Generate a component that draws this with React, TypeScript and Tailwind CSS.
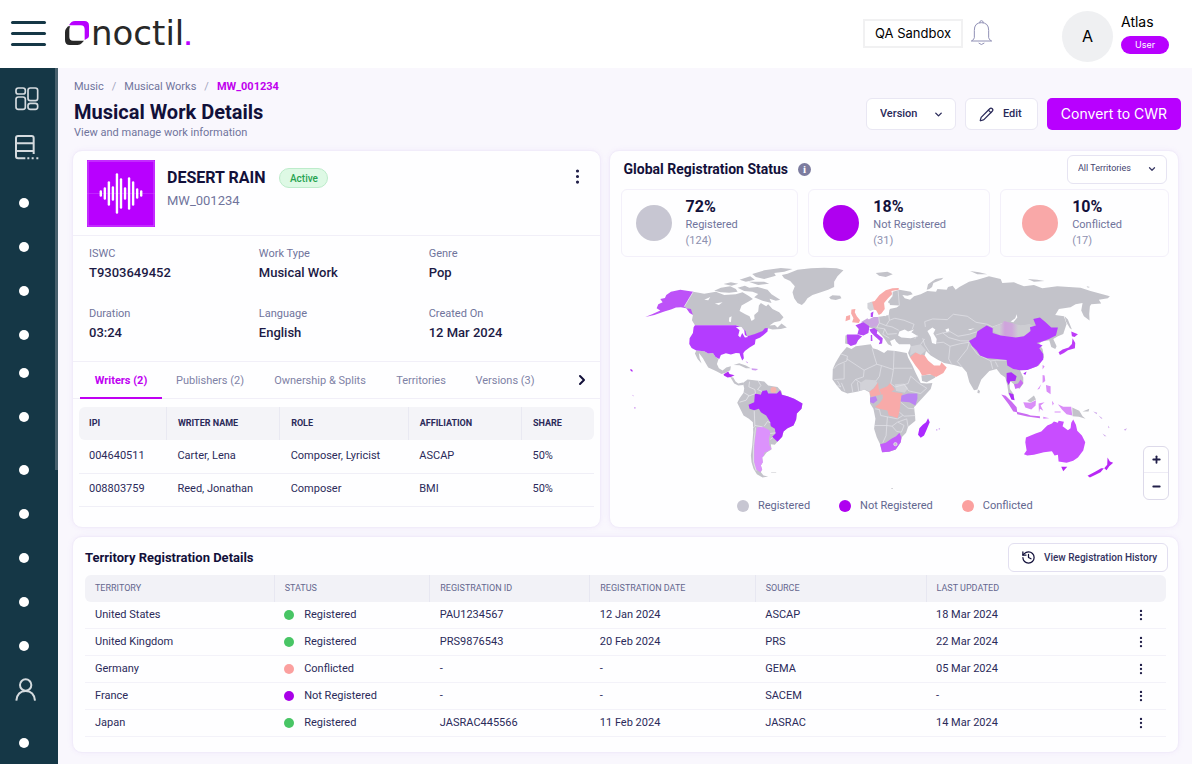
import { useState, type ReactNode } from 'react';
import { ChevronDown, ChevronRight, EllipsisVertical, History, Minus, Pencil, Plus } from 'lucide-react';

const DETAILS = [
  { label: 'ISWC', value: 'T9303649452' },
  { label: 'Work Type', value: 'Musical Work' },
  { label: 'Genre', value: 'Pop' },
  { label: 'Duration', value: '03:24' },
  { label: 'Language', value: 'English' },
  { label: 'Created On', value: '12 Mar 2024' },
];

const TABS = [
  { label: 'Writers (2)', width: 'w-[82px]' },
  { label: 'Publishers (2)', width: 'w-20' },
  { label: 'Ownership & Splits', width: 'w-[124px]' },
  { label: 'Territories', width: 'w-[62px]' },
  { label: 'Versions (3)', width: 'w-[90px]' },
];

const WRITERS = [
  { ipi: '004640511', name: 'Carter, Lena', role: 'Composer, Lyricist', affiliation: 'ASCAP', share: '50%' },
  { ipi: '008803759', name: 'Reed, Jonathan', role: 'Composer', affiliation: 'BMI', share: '50%' },
];

const WRITER_COLS = [
  { label: 'IPI', width: 'w-[17%]' },
  { label: 'WRITER NAME', width: 'w-[22%]' },
  { label: 'ROLE', width: 'w-[25%]' },
  { label: 'AFFILIATION', width: 'w-[22%]' },
  { label: 'SHARE', width: 'w-[14%]' },
];

const STATS = [
  { pct: '72%', label: 'Registered', count: '(124)', dot: 'bg-[#c7c6d2]', pad: 'pl-[14px]' },
  { pct: '18%', label: 'Not Registered', count: '(31)', dot: 'bg-[#af00f0]', pad: 'pl-[14px]' },
  { pct: '10%', label: 'Conflicted', count: '(17)', dot: 'bg-[#f9a8a8]', pad: 'pl-[21px]' },
];

const STATUS_DOT: Record<string, string> = {
  Registered: 'bg-[#48c565]',
  Conflicted: 'bg-[#fba09f]',
  'Not Registered': 'bg-[#a900e8]',
};

const TERRITORY_COLS = [
  { label: 'TERRITORY', width: 'w-[17.5%]' },
  { label: 'STATUS', width: 'w-[14.4%]' },
  { label: 'REGISTRATION ID', width: 'w-[14.8%]' },
  { label: 'REGISTRATION DATE', width: 'w-[15.3%]' },
  { label: 'SOURCE', width: 'w-[15.8%]' },
  { label: 'LAST UPDATED', width: 'w-[17.2%]' },
];

const TERRITORIES = [
  { name: 'United States', status: 'Registered', id: 'PAU1234567', date: '12 Jan 2024', source: 'ASCAP', updated: '18 Mar 2024' },
  { name: 'United Kingdom', status: 'Registered', id: 'PRS9876543', date: '20 Feb 2024', source: 'PRS', updated: '22 Mar 2024' },
  { name: 'Germany', status: 'Conflicted', id: '-', date: '-', source: 'GEMA', updated: '05 Mar 2024' },
  { name: 'France', status: 'Not Registered', id: '-', date: '-', source: 'SACEM', updated: '-' },
  { name: 'Japan', status: 'Registered', id: 'JASRAC445566', date: '11 Feb 2024', source: 'JASRAC', updated: '14 Mar 2024' },
];

const CARD = 'rounded-[10px] border border-[#f1ecfa] bg-[#fefeff] shadow-[0_0_5px_rgba(190,150,240,0.12)]';

function Logo() {
  return (
    <a href="#home" aria-label="noctil home" className="flex items-center">
      <svg width="24" height="24" viewBox="0 0 72 72" className="shrink-0">
        <path d="M12 13 Q18 0 30 0 H58 Q72 0 72 14 V44 Q72 48 69 51 L59 57 V26 Q59 13 47 13 Z" fill="#b800ff" />
        <path d="M9 16 H16 Q13 20 13 26 V48 Q13 59 24 59 H57 L50 67 Q46 72 38 72 H14 Q0 72 0 57 V34 Q0 27 3 23 Z" fill="#282828" />
      </svg>
      <span className="ml-[2px] font-['DejaVu_Sans',sans-serif] text-[34px] leading-10 font-normal text-[#282828]">
        noctil<span className="text-xl font-bold text-[#b800ff]">.</span>
      </span>
    </a>
  );
}

function TopBar() {
  return (
    <header className="flex h-[68px] shrink-0 items-center bg-white pb-[2px] pl-[11px] pr-[23px] font-[Inter,sans-serif]">
      <button type="button" aria-label="Toggle menu" className="mr-[19px] flex w-[35px] flex-col gap-2">
        <span className="h-[3px] rounded-full bg-[#153746]" />
        <span className="h-[3px] rounded-full bg-[#153746]" />
        <span className="h-[3px] rounded-full bg-[#153746]" />
      </button>
      <Logo />
      <div className="ml-auto flex items-center">
        <button type="button" className="h-[29px] w-[100px] border-2 border-[#f1f1f2] pt-px text-[13px] text-black">
          QA Sandbox
        </button>
        <button type="button" aria-label="Notifications" className="ml-[7px]">
          <svg width="23" height="26" viewBox="0 0 69 78" fill="none" stroke="#9090b5" strokeWidth="3">
            <path d="M29 9 Q29 2 34 2 Q40 2 40 9" />
            <path d="M13 53 V31 Q13 8 34 8 Q56 8 56 31 V53 Q57 60 65 63 H4 Q12 60 13 53 Z" />
            <path d="M26 69 Q34 78 43 69" />
          </svg>
        </button>
        <div className="ml-[69px] flex items-center pt-[6px]">
          <span className="flex size-[51px] items-center justify-center rounded-full bg-[#eff0f2] text-base text-black">
            A
          </span>
          <div className="ml-2 flex flex-col gap-[3px] pb-[7px]">
            <span className="text-sm leading-[22px] text-black">Atlas</span>
            <span className="flex h-[18px] w-12 items-center justify-center rounded-full bg-[#b800ff] text-[9px] text-white">
              User
            </span>
          </div>
        </div>
      </div>
    </header>
  );
}

function NavDots({ count }: { count: number }) {
  return (
    <>
      {Array.from({ length: count }, (_, i) => (
        <a key={i} href="#section" aria-label="Section" className="flex h-10 items-center pl-[19px]">
          <span className="size-[10px] rounded-full bg-white" />
        </a>
      ))}
    </>
  );
}

function Sidebar() {
  return (
    <nav className="relative flex w-[58px] shrink-0 flex-col gap-1 bg-[#153746] pt-[11px]">
      {/* scroll thumb */}
      <span className="absolute right-0 top-0 h-[402px] w-[3px] bg-[#48606d]" />
      <a href="#dashboard" aria-label="Dashboard" className="flex h-10 items-center pl-[15px]">
        <svg width="24" height="24" viewBox="0 0 72 72" fill="none" stroke="#d5dbdf" strokeWidth="5">
          <rect x="3" y="3" width="28" height="18" rx="7" />
          <rect x="39" y="3" width="29" height="38" rx="7" />
          <rect x="3" y="30" width="28" height="37" rx="7" />
          <rect x="39" y="49" width="29" height="18" rx="7" />
        </svg>
      </a>
      <a href="#catalogue" aria-label="Catalogue" className="mt-1 flex h-10 items-center pl-[15px]">
        <svg width="24" height="25" viewBox="0 0 72 75" fill="none" stroke="#d5dbdf" strokeWidth="6">
          <path d="M31 70 H9 Q3 70 3 64 V9 Q3 3 9 3 H50 Q56 3 56 9 V57 M3 25 H56 M3 48 H56" />
          <path d="M37 70 h6 M50 70 h6 M64 70 h6" />
        </svg>
      </a>
      <div className="mt-3 flex flex-col gap-1">
        <NavDots count={4} />
      </div>
      <div className="-mt-[6px] flex flex-col gap-1">
        <NavDots count={2} />
      </div>
      <div className="mt-[9px] flex flex-col gap-1">
        <NavDots count={5} />
        <a href="#profile" aria-label="Profile" className="flex h-10 items-center pl-[15px]">
          <svg width="22" height="24" viewBox="0 0 66 72" fill="none" stroke="#d5dbdf" strokeWidth="6">
            <circle cx="32" cy="21" r="17" />
            <path d="M4 68 C6 47 18 39 32 39 C46 39 58 47 60 68" />
          </svg>
        </a>
      </div>
      <div className="mt-[9px]">
        <NavDots count={1} />
      </div>
    </nav>
  );
}

function PageHeader() {
  return (
    <div className="flex items-start justify-between pl-[2px]">
      <div>
        <nav aria-label="Breadcrumb" className="flex gap-2 text-[11px] leading-[18px] text-[#70749c]">
          <a href="#music">Music</a>
          <span className="text-[#a3a5bd]">/</span>
          <a href="#works">Musical Works</a>
          <span className="text-[#a3a5bd]">/</span>
          <a href="#work" className="font-bold text-[#c000ee]">
            MW_001234
          </a>
        </nav>
        <h1 className="mt-[2px] text-xl leading-7 font-bold text-[#12103a]">Musical Work Details</h1>
        <p className="text-[11px] leading-[14px] text-[#70749c]">View and manage work information</p>
      </div>
      <div className="-mr-[2px] flex gap-[9px] pt-5">
        <div className="relative">
          <select
            aria-label="Version"
            className="h-8 w-[90px] appearance-none rounded-md border border-[#e9e7f3] bg-white pl-[13px] text-[11px] font-medium text-[#2a2a59]"
          >
            <option>Version</option>
          </select>
          <ChevronDown size={11} strokeWidth={3} className="pointer-events-none absolute right-3 top-[11px] text-[#2a2a59]" />
        </div>
        <button
          type="button"
          className="flex h-8 w-[73px] items-center gap-[9px] rounded-md border border-[#e9e7f3] bg-white pl-[13px] text-[11px] font-medium text-[#2a2a59]"
        >
          <Pencil size={15} strokeWidth={2} /> Edit
        </button>
        <button
          type="button"
          className="h-8 w-[134px] rounded-[5px] bg-[#b800ff] font-[Inter,sans-serif] text-sm text-white"
        >
          Convert to CWR
        </button>
      </div>
    </div>
  );
}

const WAVE = [3, 6, 12, 7, 20, 15, 6, 16, 12, 5, 3];

function Artwork() {
  return (
    <svg width="68" height="67" viewBox="0 0 68 67" className="shrink-0">
      <rect width="68" height="67" fill="#b800ff" />
      <rect x="1" y="1" width="66" height="65" fill="none" stroke="#cd55ff" strokeWidth="1" />
      <path d="M0 33.5 H68" stroke="#cb4bff" strokeWidth="0.5" />
      {WAVE.map((h, i) => (
        <path key={i} d={`M${13.8 + i * 4.04} ${33.5 - h + 1} v${h * 2 - 2}`} stroke="#fff" strokeWidth="2.4" strokeLinecap="round" />
      ))}
    </svg>
  );
}

function WorkCard() {
  const [tab, setTab] = useState(0);

  return (
    <section className={`${CARD} flex flex-col`}>
      <div className="flex h-[85px] items-start border-b border-[#f1eff8] pl-[14px] pt-[9px]">
        <Artwork />
        <div className="ml-3 pt-[6px]">
          <div className="flex items-center gap-[14px]">
            <h2 className="text-base leading-6 font-bold text-[#12103a]">DESERT RAIN</h2>
            <span className="flex h-5 w-[49px] items-center justify-center rounded-full border border-[#bdeccb] bg-[#def9e5] text-[10px] font-medium text-[#26a350]">
              Active
            </span>
          </div>
          <p className="text-[13px] leading-[22px] text-[#70749c]">MW_001234</p>
        </div>
        <button type="button" aria-label="Work actions" className="ml-auto mr-[13px] mt-[7px] text-[#22204a]">
          <EllipsisVertical size={19} strokeWidth={2} />
        </button>
      </div>

      <dl className="grid h-[125px] grid-cols-[170fr_170fr_171fr] content-start gap-y-[23px] pl-4 pt-[9px]">
        {DETAILS.map((d) => (
          <div key={d.label}>
            <dt className="text-[11px] leading-[18px] text-[#70749c]">{d.label}</dt>
            <dd className="text-[13px] leading-[19px] font-medium text-[#1c1a45]">{d.value}</dd>
          </div>
        ))}
      </dl>

      <div className="flex h-[38px] items-stretch border-y border-[#f1eff8] pl-[7px]">
        <div role="tablist" className="flex gap-2">
          {TABS.map((t, i) => (
            <button
              key={t.label}
              type="button"
              role="tab"
              aria-selected={tab === i}
              onClick={() => setTab(i)}
              className={`${t.width} -mb-px whitespace-nowrap border-b-2 pt-1 text-[11px] ${
                tab === i ? 'border-[#bf00f2] font-bold text-[#bf00f2]' : 'border-transparent text-[#7e82a6]'
              }`}
            >
              {t.label}
            </button>
          ))}
        </div>
        <button type="button" aria-label="More tabs" className="ml-auto mr-[10px] text-[#12103a]">
          <ChevronRight size={16} strokeWidth={3} />
        </button>
      </div>

      <div className="px-[6px] pt-2">
        <table className="w-full table-fixed text-left text-[11px] text-[#2b2a5a]">
          <thead>
            <tr className="h-[33px] bg-[#f4f4f8]">
              {WRITER_COLS.map((c) => (
                <th
                  key={c.label}
                  className={`${c.width} border-l border-[#e9e9f2] pl-[11px] text-[9px] font-bold first:rounded-l-md first:border-l-0 first:pl-[10px] last:rounded-r-md`}
                >
                  {c.label}
                </th>
              ))}
            </tr>
          </thead>
          <tbody>
            {WRITERS.map((w) => (
              <tr key={w.ipi} className="h-[33px] border-b border-[#f0eff7]">
                <td className="pl-[10px]">{w.ipi}</td>
                <td className="pl-[11px]">{w.name}</td>
                <td className="pl-[11px]">{w.role}</td>
                <td className="pl-[11px]">{w.affiliation}</td>
                <td className="pl-[11px]">{w.share}</td>
              </tr>
            ))}
          </tbody>
        </table>
      </div>
    </section>
  );
}

function WorldMap() {
  return (
    <svg viewBox="0 0 1647 696" className="block w-full" role="img" aria-label="World map of registration status">
      <defs>
        <linearGradient id="mongolia" x1="0" x2="1">
          <stop offset="0.15" stopColor="#cdcdd2" />
          <stop offset="0.28" stopColor="#cfa3dc" />
          <stop offset="0.45" stopColor="#cfa8dc" />
          <stop offset="0.6" stopColor="#cdcdd2" />
        </linearGradient>
      </defs>

      {/* Americas */}
      <g fill="#c3c3ca">
        <path d="M217 98 L250 104 L285 98 L310 108 L345 106 L365 100 L385 112 L396 120 L382 128 L362 140 L356 156 L372 165 L386 172 L392 186 L401 180 L400 168 L412 158 L414 140 L420 132 L436 142 L442 136 L455 150 L475 160 L488 175 L478 186 L460 190 L446 200 L462 198 L470 206 L482 194 L498 206 L480 210 L455 212 L441 208 L425 218 L400 228 L376 232 L372 218 L362 205 L345 199 L222 199 L213 184 L216 168 L205 152 L190 143 Z" />
        <path d="M280 95 L300 86 L328 82 L345 90 L350 98 L325 101 L300 100 Z M308 75 L330 70 L352 74 L332 80 Z M350 86 L372 80 L385 86 L410 84 L440 92 L452 106 L478 122 L465 125 L446 119 L452 132 L425 125 L400 115 L412 105 L395 98 L370 96 Z M356 62 L388 52 L402 62 L375 68 Z M394 45 L430 34 L480 27 L515 30 L490 38 L460 42 L465 50 L430 60 L405 54 Z M383 68 L430 68 L445 74 L412 78 Z M352 112 L372 118 L366 128 L352 126 Z" />
        <path d="M483 48 L500 44 L530 32 L570 28 L610 26 L648 28 L668 34 L650 52 L640 68 L640 84 L622 92 L600 100 L575 108 L560 118 L552 130 L543 138 L530 132 L520 118 L515 100 L522 82 L508 66 L490 58 Z" />
        <path d="M226 275 L250 277 L262 284 L276 282 L284 294 L293 300 L288 315 L294 328 L305 335 L316 326 L330 322 L328 334 L312 342 L302 345 L285 336 L262 326 L254 312 L246 298 L234 282 L236 298 L242 314 L230 300 L222 284 Z" />
        <path d="M328 354 L337 356 L344 368 L352 374 L366 371 L368 378 L352 380 L340 374 Z M338 318 L355 313 L375 320 L390 328 L375 328 L356 319 Z" />
        <path d="M366 372 L380 362 L400 364 L430 368 L442 380 L470 384 L482 398 L484 408 L500 412 L520 420 L545 434 L542 450 L528 464 L526 482 L518 500 L500 508 L488 518 L484 534 L470 548 L462 558 L450 556 L452 572 L438 580 L430 590 L424 596 L426 610 L420 620 L424 632 L420 640 L428 650 L442 653 L425 656 L408 646 L398 630 L392 610 L390 590 L394 560 L397 520 L396 490 L384 480 L368 470 L356 446 L349 432 L356 418 L368 402 L370 388 Z" />
        <path d="M452 640 h14 v2 h-16 Z" />
      </g>
      <path fill="#bd52f8" d="M217 98 L190 143 L198 148 L210 150 L216 168 L206 162 L196 148 L180 145 L165 146 L150 152 L130 158 L100 168 L73 174 L95 165 L118 155 L107 148 L112 136 L125 130 L118 120 L132 117 L136 108 L150 98 L178 92 Z" />
      <path fill="#b43cff" d="M222 199 L345 199 L362 206 L374 216 L378 232 L400 226 L425 216 L432 208 L441 207 L440 218 L428 228 L418 236 L404 242 L402 256 L386 266 L372 276 L367 283 L369 298 L364 305 L358 290 L356 283 L345 282 L330 287 L315 283 L300 288 L295 300 L284 294 L276 282 L262 284 L250 277 L226 275 L212 267 L205 255 L206 238 L216 222 L218 205 Z" />
      <path fill="#fdfdff" d="M345 204 L362 204 L370 214 L372 228 L382 234 L372 236 L364 222 L358 236 L352 230 L356 214 Z M325 176 L332 172 L330 190 L324 188 Z M282 134 L305 130 L294 138 Z M250 122 L268 114 L262 124 Z" />
      <path fill="#b22cf5" d="M308 346 L322 338 L326 345 L341 349 L330 354 L320 356 L309 350 Z M27 331 L33 332 L36 338 L30 337 Z" />
      <path fill="#cf9af0" d="M392 328 L412 330 L405 335 L393 333 Z M33 408 L38 410 L37 413 Z M39 445 h5 v4 h-5 Z M374 306 l8 5 -3 2 Z" />
      <path fill="#ab29ff" d="M402 404 L420 408 L424 396 L438 394 L442 404 L468 404 L478 394 L483 408 L500 412 L520 420 L545 434 L542 450 L528 464 L526 482 L518 500 L500 508 L488 518 L484 534 L470 549 L454 534 L464 524 L462 510 L450 502 L447 488 L436 470 L420 460 L414 450 L400 454 L386 450 L383 438 L400 430 Z" />
      <path fill="#dc92fc" d="M408 506 L425 504 L446 514 L448 524 L444 540 L446 560 L452 570 L440 578 L430 582 L430 590 L424 596 L426 610 L420 620 L424 632 L418 640 L406 632 L400 610 L400 580 L401 550 Z" />
      <circle cx="458" cy="393" r="9" fill="#f6b3ad" />
      <path fill="none" stroke="#ededf2" strokeWidth="2" d="M190 143 L217 98 M386 368 L384 384 L402 392 L404 404 L382 412 M370 402 L384 410 L376 424 L356 430 M412 366 L420 380 L410 392 L424 398 M400 455 L402 500 L397 508 M402 500 L425 504 M430 502 L440 488 L449 492 M448 524 L464 522 M448 542 L456 536 M404 506 L398 560 L398 610 L406 636" />

      {/* Europe, Africa and western Asia */}
      <g transform="translate(600 0)">
        <g fill="#c3c3ca">
          <path d="M25 115 L35 109 L58 110 L62 118 L45 123 L30 121 Z M165 42 L200 38 L216 46 L195 54 L175 50 Z M318 92 L322 76 L345 60 L368 56 L362 62 L338 72 L334 84 L326 90 Z M448 36 L475 40 L500 46 L470 46 Z M621 60 L650 62 L672 66 L640 68 Z M798 82 l10 2 -6 2 Z" />
          <path d="M78 264 L92 270 L105 262 L150 256 L156 268 L170 272 L190 282 L200 274 L225 276 L258 282 L262 296 L275 320 L285 342 L300 372 L318 374 L335 372 L330 390 L310 412 L292 432 L280 445 L283 470 L284 486 L262 504 L256 522 L243 535 L240 550 L225 572 L205 579 L184 580 L178 556 L168 535 L160 510 L164 480 L158 450 L148 434 L148 414 L146 400 L130 392 L112 398 L80 404 L62 396 L48 380 L35 362 L36 330 L44 312 L60 285 Z" />
          <path d="M128 190 L140 182 L152 180 L160 176 L185 172 L204 168 L206 150 L228 146 L236 140 L205 138 L202 128 L215 112 L216 98 L236 92 L270 98 L276 106 L260 110 L245 108 L252 118 L268 122 L280 112 L300 106 L320 96 L346 98 L350 90 L378 92 L382 84 L396 80 L405 92 L416 84 L445 68 L470 62 L505 52 L540 60 L545 72 L580 70 L610 82 L640 78 L665 88 L710 82 L780 86 L810 96 L868 112 L862 118 L835 122 L842 134 L812 136 L808 142 L806 165 L807 185 L790 172 L782 155 L786 132 L765 136 L750 145 L715 150 L704 168 L730 172 L738 195 L728 225 L712 232 L698 240 L708 262 L704 270 L692 264 L686 244 L664 248 L655 255 L666 270 L670 295 L655 320 L620 333 L598 334 L608 356 L608 374 L596 390 L584 380 L566 364 L568 390 L580 408 L578 424 L564 406 L560 380 L554 356 L540 346 L528 330 L506 336 L482 362 L470 392 L460 394 L446 370 L438 340 L425 325 L400 318 L370 312 L350 302 L330 290 L316 276 L312 290 L268 296 L262 282 L270 262 L268 256 L235 256 L226 248 L222 240 L208 246 L214 262 L202 256 L190 238 L172 218 L160 210 L146 206 Z" />
          <path d="M302 350 L340 346 L344 356 L318 370 L304 366 Z M472 392 l6 4 -2 8 -6 -2 Z M74 230 L80 228 L82 256 L73 254 Z M732 172 L742 182 L754 212 L748 208 L736 188 Z M212 688 h4 v3 h-4 Z" />
        </g>
        <path fill="#fdfdff" d="M232 230 L236 218 L252 212 L262 218 L280 212 L272 220 L292 232 L270 238 L242 236 Z M320 216 L335 206 L344 212 L338 224 L348 240 L346 256 L334 252 L330 234 Z M374 212 l10 -4 2 8 -8 4 Z M442 212 L462 208 L448 214 Z M570 188 L584 178 L588 166 L590 176 L578 190 Z M196 134 L206 132 L210 146 L194 172 L186 168 Z M318 292 L334 304 L346 316 L356 316 L352 320 L340 318 L324 302 Z" />
        <g fill="#f8aaa9">
          <path d="M148 130 L162 126 L176 108 L195 94 L215 88 L234 87 L234 92 L212 96 L214 106 L202 118 L190 132 L192 150 L182 164 L174 168 L166 154 L158 152 Z" />
          <path d="M92 152 L104 150 L102 160 L108 172 L118 184 L114 192 L94 190 L98 178 L91 164 Z M76 172 L88 168 L88 182 L74 187 Z" />
          <path d="M268 296 L285 280 L312 290 L322 305 L340 320 L358 320 L362 310 L378 326 L368 342 L346 354 L328 346 L304 350 L296 335 L284 320 Z" />
          <path d="M186 404 L205 396 L222 400 L246 404 L240 425 L238 442 L236 460 L230 478 L215 472 L204 470 L200 455 L175 450 L163 444 L176 434 L186 420 Z M176 392 L200 382 L208 372 L222 392 L205 402 L182 408 Z M146 398 L160 388 L172 370 L174 390 L180 408 L160 412 L150 414 Z" />
        </g>
        <path fill="#d2d2d8" d="M118 372 L134 362 L165 364 L170 372 L158 388 L146 398 L132 392 L118 396 Z M222 376 L250 374 L262 388 L252 402 L226 396 Z M270 262 L300 256 L316 274 L300 288 L284 280 L268 290 Z M140 132 L154 128 L160 152 L148 156 L140 148 Z" />
        <path fill="#cba7e0" d="M146 180 L158 174 L174 174 L174 192 L168 202 L150 204 L144 192 Z M120 190 L140 178 L146 184 L144 200 L130 194 Z" />
        <path fill="#b54af7" d="M150 162 L158 158 L156 174 L150 174 Z M104 199 L118 194 L128 190 L146 202 L143 222 L128 230 L110 226 L114 210 Z M78 227 L110 227 L124 232 L112 244 L106 256 L90 261 L80 254 Z M146 212 L160 207 L170 214 L168 224 L186 238 L184 254 L174 256 L178 246 L162 232 L150 220 Z M150 228 h4 l1 18 h-5 Z" />
        <path fill="#ba82f3" d="M148 416 L165 412 L170 424 L158 434 L148 430 Z M242 410 L262 404 L290 404 L290 420 L284 440 L266 430 L240 428 Z" />
        <path fill="#ab29ff" d="M322 478 L327 490 L318 512 L310 530 L300 537 L292 528 L296 508 L306 498 L316 490 Z" />
        <path fill="#c35cfb" d="M178 556 L195 552 L212 540 L226 532 L236 522 L242 536 L240 550 L225 572 L205 579 L184 580 Z" />
        <circle cx="224" cy="556" r="5" fill="#c3c3ca" stroke="#ededf2" strokeWidth="2" />
        <path fill="#cfa3f2" d="M346 511 h4 v4 h-4 Z M354 508 h4 v4 h-4 Z" />
        <path
          fill="none"
          stroke="#e6e6ec"
          strokeWidth="2"
          d="M60 285 L80 292 L78 306 L50 318 L38 330 M78 300 L130 334 L168 316 L160 290 L154 268 M168 316 L182 320 L218 332 L220 276 M220 328 L274 328 M70 312 L70 360 L40 362 M130 334 L128 354 L104 362 L92 376 M104 362 L120 372 M182 320 L176 352 L166 366 M218 332 L214 356 L210 374 M210 374 L224 384 L262 374 L270 352 M250 376 L264 396 L300 404 L318 388 L296 374 L270 352 M62 372 L72 396 M92 376 L96 400 M110 370 L114 398 M50 366 L60 384 L50 380 M240 430 L262 448 L282 450 M236 460 L250 472 L284 470 M163 450 L176 452 L180 470 L200 474 L198 500 L160 500 M200 474 L230 480 L246 470 M198 500 L196 530 L186 552 M198 500 L214 502 L230 490 L258 480 M214 502 L228 518 L242 520 L250 500 L232 490 M258 480 L262 504"
        />
        <path
          fill="none"
          stroke="#e6e6ec"
          strokeWidth="2"
          d="M174 174 L176 192 L196 200 L206 184 L204 168 M206 184 L222 178 L250 184 L280 196 L274 212 M176 192 L168 206 L192 210 L200 226 L228 224 M196 200 L214 204 L234 214 M192 210 L186 226 L206 238 M214 112 L216 98 M232 94 L236 140 M314 204 L312 188 L336 180 L380 182 L398 166 L440 172 L466 190 L500 196 L516 204 L544 194 L600 202 L628 198 M346 228 L366 222 L384 236 L420 246 L446 246 M366 222 L388 218 L412 232 L446 226 L470 218 M306 238 L312 258 L326 280 M346 252 L368 250 L388 262 L384 300 L392 314 M388 262 L420 254 L446 250 M446 250 L440 270 L424 290 L410 308 L424 324 M452 262 L470 286 L510 306 L528 304 L558 304 M510 306 L516 330 M524 308 L532 324 M300 256 L312 240 M282 240 L290 228"
        />
        <path fill="url(#mongolia)" d="M518 204 L544 194 L550 186 L572 192 L600 200 L628 196 L642 202 L630 210 L626 222 L608 232 L585 236 L540 230 L518 218 Z" />
        <path fill="#b43cff" d="M445 246 L466 234 L470 218 L498 200 L516 208 L516 222 L540 230 L585 236 L610 232 L630 216 L628 205 L646 200 L638 180 L658 176 L675 190 L692 206 L712 206 L706 230 L685 240 L665 248 L648 252 L666 260 L656 268 L668 285 L668 302 L650 322 L620 333 L598 334 L578 330 L560 320 L558 303 L530 300 L500 298 L478 290 L468 275 L455 262 Z" />
      </g>

      {/* South-east Asia and Oceania */}
      <g transform="translate(1080 0)">
        <path fill="#ab2df8" d="M78 342 L92 340 L108 352 L104 366 L90 366 L84 378 L78 366 Z M84 402 L98 406 L102 424 L92 422 Z M128 344 L138 338 L134 348 Z" />
        <path fill="#ca6cf2" d="M100 376 L112 374 L120 362 L128 372 L118 386 L104 390 Z M62 407 L75 411 L95 430 L108 445 L110 460 L98 458 L84 436 Z M108 459 L140 466 L150 470 L178 472 L178 478 L140 473 L110 466 Z" />
        <path fill="#da8df8" d="M128 430 L150 432 L166 424 L165 440 L152 452 L134 446 Z M174 434 L192 430 L180 440 L188 456 L178 450 L175 462 Z M186 348 L192 350 L194 366 L186 372 Z M196 378 L210 382 L210 406 L198 398 Z M170 392 L182 376 L176 390 Z M186 318 L192 322 L186 332 Z M188 474 L206 478 L188 480 Z M214 426 l6 8 -4 6 Z M232 436 L248 444 L272 444 L275 470 L258 466 L244 452 Z M222 458 h18 v3 h-18 Z" />
        <path fill="#c3c3ca" d="M140 426 L160 410 L166 422 L150 431 Z M275 446 L296 456 L306 472 L315 480 L295 474 L276 472 Z M306 458 L326 450 L324 458 Z" />
        <path fill="#cfaaec" d="M338 458 L350 462 L348 466 Z M354 470 L366 478 L362 480 Z M366 524 L378 532 L372 532 Z M430 512 L440 508 L434 516 Z M382 500 l5 6 -3 2 Z" />
        <path fill="#bd3bf8" d="M272 218 L292 226 L282 234 L274 232 Z M276 238 L284 252 L283 268 L262 274 L250 282 L238 288 L234 280 L246 272 L264 266 L274 255 Z" />
        <path fill="#c84dff" d="M136 536 L165 524 L182 518 L200 500 L214 494 L220 488 L232 492 L234 486 L250 489 L246 502 L262 514 L270 508 L272 492 L278 482 L286 498 L290 516 L304 530 L314 550 L308 575 L292 596 L278 606 L258 612 L234 608 L232 588 L222 590 L214 577 L190 580 L160 588 L140 590 L130 586 L138 575 L134 550 Z" />
        <path fill="#b827f5" d="M242 624 L260 624 L248 637 Z M381 596 L388 608 L398 612 L386 622 L378 634 L371 628 L380 618 Z M370 628 L360 640 L345 648 L328 656 L321 651 L345 638 L362 628 Z" />
      </g>
    </svg>
  );
}

function Legend({ dot, children }: { dot: string; children: ReactNode }) {
  return (
    <li className="flex items-center gap-[9px]">
      <span className={`size-3 rounded-full ${dot}`} />
      {children}
    </li>
  );
}

function StatusCard() {
  return (
    <section className={`${CARD} flex flex-col pb-[13px] pl-[11px] pr-[9px]`}>
      <div className="flex h-[38px] items-center pb-[2px] pl-[3px]">
        <h2 className="text-sm font-bold text-[#12103a]">Global Registration Status</h2>
        <span
          title="Share of territories by status"
          className="ml-[10px] flex size-[13px] items-center justify-center rounded-full bg-[#7c7c9f] font-['Liberation_Serif',serif] text-[11px] leading-none font-bold text-white"
        >
          i
        </span>
        <div className="relative ml-auto mr-[2px]">
          <select
            aria-label="Territory filter"
            className="h-[29px] w-[100px] appearance-none rounded-md border border-[#e6e4f2] bg-white pl-[10px] text-[9px] text-[#44446f]"
          >
            <option>All Territories</option>
          </select>
          <ChevronDown size={10} strokeWidth={3} className="pointer-events-none absolute right-[10px] top-[10px] text-[#3a3a66]" />
        </div>
      </div>

      <div className="grid grid-cols-[178fr_182fr_169fr] gap-[10px]">
        {STATS.map((s) => (
          <div key={s.label} className={`flex h-[68px] items-center gap-[14px] rounded-md border border-[#f3f0fa] ${s.pad}`}>
            <span className={`size-9 shrink-0 rounded-full ${s.dot}`} />
            <div className="text-[11px] leading-4 text-[#70749c]">
              <div className="text-base leading-5 font-bold text-[#12103a]">{s.pct}</div>
              <div>{s.label}</div>
              <div className="text-[#8e91b0]">{s.count}</div>
            </div>
          </div>
        ))}
      </div>

      <div className="relative pt-[2px]">
        <WorldMap />
        <div className="absolute bottom-[-9px] right-0 flex h-[54px] w-[26px] flex-col rounded-md border border-[#dddaea] bg-white text-[#22204a]">
          <button type="button" aria-label="Zoom in" className="flex flex-1 items-center justify-center border-b border-[#eeecf5]">
            <Plus size={11} strokeWidth={4} />
          </button>
          <button type="button" aria-label="Zoom out" className="flex flex-1 items-center justify-center">
            <Minus size={11} strokeWidth={4} />
          </button>
        </div>
      </div>

      <ul className="flex justify-center gap-[29px] pr-5 pt-[7px] text-[11px] leading-4 text-[#62668f]">
        <Legend dot="bg-[#c7c6d2]">Registered</Legend>
        <Legend dot="bg-[#af00f0]">Not Registered</Legend>
        <Legend dot="bg-[#fba09f]">Conflicted</Legend>
      </ul>
    </section>
  );
}

function TerritoryCard() {
  return (
    <section className={`${CARD} px-3 pb-[15px] pt-[6px]`}>
      <div className="-mr-[2px] flex items-center justify-between">
        <h2 className="text-[13px] font-bold text-[#12103a]">Territory Registration Details</h2>
        <button
          type="button"
          className="flex h-[29px] w-40 items-center gap-2 whitespace-nowrap rounded-md border border-[#e2dff0] bg-white pl-3 text-[10px] font-medium text-[#33335f]"
        >
          <History size={15} strokeWidth={2} className="text-[#12103a]" />
          View Registration History
        </button>
      </div>
      <table className="mt-[3px] w-full table-fixed text-left text-[11px] text-[#2b2a5a]">
        <thead>
          <tr className="h-[27px] bg-[#f2f2f7]">
            {TERRITORY_COLS.map((c) => (
              <th
                key={c.label}
                className={`${c.width} border-l border-[#e7e7f1] pl-[10px] pt-px text-[9px] font-normal text-[#65688f] first:rounded-l-md first:border-l-0`}
              >
                {c.label}
              </th>
            ))}
            <th className="rounded-r-md" aria-label="Actions" />
          </tr>
        </thead>
        <tbody>
          {TERRITORIES.map((t) => (
            <tr key={t.name} className="h-[27px] border-b border-[#f3f2f9]">
              <td className="pl-[10px]">{t.name}</td>
              <td className="pl-[10px]">
                <span className="flex items-center gap-[10px]">
                  <span className={`size-[10px] rounded-full ${STATUS_DOT[t.status]}`} />
                  {t.status}
                </span>
              </td>
              <td className="pl-[10px]">{t.id}</td>
              <td className="pl-[10px]">{t.date}</td>
              <td className="pl-[10px]">{t.source}</td>
              <td className="pl-[10px]">{t.updated}</td>
              <td className="text-right">
                <button type="button" aria-label={`${t.name} actions`} className="mr-[18px] align-middle text-[#22204a]">
                  <EllipsisVertical size={14} strokeWidth={2} />
                </button>
              </td>
            </tr>
          ))}
        </tbody>
      </table>
    </section>
  );
}

export default function App() {
  return (
    <div className="flex min-h-screen flex-col bg-white">
      <TopBar />
      <div className="flex flex-1">
        <Sidebar />
        <main className="min-w-0 flex-1 bg-[#f9f7fd] pb-3 pl-[14px] pr-[13px] pt-[10px] font-[Roboto,sans-serif]">
          <PageHeader />
          <div className="mt-[10px] grid grid-cols-[minmax(0,529fr)_minmax(0,571fr)] gap-2">
            <WorkCard />
            <StatusCard />
          </div>
          <div className="mt-2">
            <TerritoryCard />
          </div>
        </main>
      </div>
    </div>
  );
}
